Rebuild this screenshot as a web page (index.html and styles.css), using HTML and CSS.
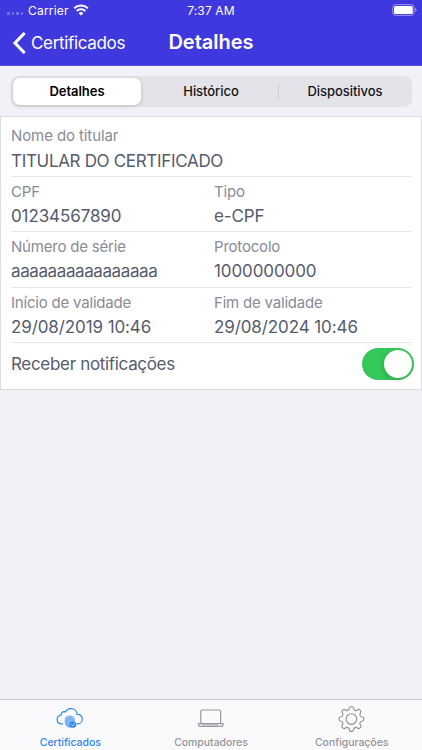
FILE: index.html
```html
<!DOCTYPE html>
<html lang="pt-BR">
  <head>
    <meta charset="utf-8" />
    <meta name="viewport" content="width=device-width, initial-scale=1" />
    <title>Detalhes</title>
    <link rel="stylesheet" href="styles.css">
  </head>
  <body>
    <header class="header">
      <div class="status">
        <div class="carrier">
          <span class="signal"><i></i><i></i><i></i><i></i></span>
          <span class="carrier-name">Carrier</span>
          <svg class="wifi" width="16" height="12" viewBox="0 0 16 12" fill="none" stroke="#fff" stroke-width="2.1">
            <path d="M1.2 4.3a9.8 9.8 0 0 1 13.6 0" />
            <path d="M3.7 7a6.2 6.2 0 0 1 8.6 0" />
            <path d="M8 11.6 5.6 9.2a3.4 3.4 0 0 1 4.8 0z" fill="#fff" stroke="none" />
          </svg>
        </div>
        <span class="time">7:37 AM</span>
        <svg class="battery" width="26" height="12" viewBox="0 0 26 12">
          <rect x="0.7" y="0.6" width="21.4" height="10.8" rx="3" fill="none" stroke="#fff" stroke-opacity="0.45" />
          <rect x="2" y="2" width="18.8" height="8" rx="1.6" fill="#fff" />
          <path d="M23.2 4v4c1.7-.7 1.7-3.3 0-4z" fill="#fff" fill-opacity="0.5" />
        </svg>
      </div>
      <nav class="nav">
        <a class="back">
          <svg width="14" height="24" viewBox="0 0 14 24" fill="none" stroke="#fff" stroke-width="3.1">
            <path d="M12.6 2 3 12l9.6 10" />
          </svg>
          <span>Certificados</span>
        </a>
        <h1 class="title">Detalhes</h1>
        <span></span>
      </nav>
    </header>

    <main class="content">
      <div class="segments">
        <button class="segment active">Detalhes</button>
        <button class="segment">Histórico</button>
        <button class="segment divided">Dispositivos</button>
      </div>

      <section class="card">
        <div class="row first">
          <div class="field">
            <p class="label">Nome do titular</p>
            <p class="value tight">TITULAR DO CERTIFICADO</p>
          </div>
        </div>
        <div class="row">
          <div class="field">
            <p class="label">CPF</p>
            <p class="value">01234567890</p>
          </div>
          <div class="field">
            <p class="label">Tipo</p>
            <p class="value">e-CPF</p>
          </div>
        </div>
        <div class="row">
          <div class="field">
            <p class="label">Número de série</p>
            <p class="value serial">aaaaaaaaaaaaaaaa</p>
          </div>
          <div class="field">
            <p class="label">Protocolo</p>
            <p class="value">1000000000</p>
          </div>
        </div>
        <div class="row">
          <div class="field">
            <p class="label">Início de validade</p>
            <p class="value">29/08/2019 10:46</p>
          </div>
          <div class="field">
            <p class="label">Fim de validade</p>
            <p class="value">29/08/2024 10:46</p>
          </div>
        </div>
        <div class="notify">
          <p class="value tight">Receber notificações</p>
          <div class="switch"><div class="knob"></div></div>
        </div>
      </section>
    </main>

    <footer class="tabs">
      <a class="tab selected">
        <svg width="28" height="24" viewBox="0 0 28 24" fill="none" stroke="#2f86ea" stroke-width="1.2" stroke-linecap="round">
          <path d="M6.6 17.8H5.9C3 17.8 1.2 15.8 1.2 13.4c0-2.3 1.6-4.1 3.8-4.3C5 7 6.5 5.6 8.1 5.6c.6 0 1.1.1 1.5.3C10.5 3.9 12.5 2.7 15 2.7c3.5 0 6 2.5 6.2 5.7 2.9-.2 5.1 1.8 5.1 4.5s-2 4.9-4.6 4.9h-.9" />
          <path d="M8.6 14.4c0-3.2 2.1-4.9 5.2-4.9s5.2 1.8 5.2 4.9v3.2c0 2.4-2.2 4.3-4.8 4.3-3.6 0-5.6-2.9-5.6-7.5z" fill="#8bbcf5" stroke="none" />
          <path d="M10.3 18.3v-3.4c0-4.3 6.6-4.3 6.6-.2M12 20v-4.7c0-2.3 3.3-2.3 3.3 0v2.4M13.7 15.5v5" stroke="#62a5f1" stroke-width=".7" />
          <circle cx="17" cy="18.6" r="3.2" fill="#2f86ea" stroke="none" />
          <path d="m15.6 18.6 1.1 1.1 1.9-2.1" stroke="#fff" stroke-width=".9" />
        </svg>
        <span>Certificados</span>
      </a>
      <a class="tab">
        <svg width="28" height="24" viewBox="0 0 28 24" fill="none" stroke="#97979c" stroke-width="1.2">
          <path d="M3.8 17V5.3c0-.9.4-1.3 1.3-1.3h17.2c.9 0 1.3.4 1.3 1.3V17" />
          <path d="M1.5 17.6h24.6v1c0 1.1-.6 1.7-1.7 1.7H3.2c-1.1 0-1.7-.6-1.7-1.7z" />
          <path d="M5 18.9h16" stroke-width=".9" />
        </svg>
        <span>Computadores</span>
      </a>
      <a class="tab">
        <svg width="28" height="28" viewBox="-13.4 -13 28 28" fill="none" stroke="#929297" stroke-width="1.15">
          <defs>
            <path id="tooth" d="M-3.6-8.6C-2.4-9.1-2.2-9.6-2-11Q-1.8-12.3-.9-12.3H.9Q1.8-12.3 2-11C2.2-9.6 2.4-9.1 3.6-8.6" />
          </defs>
          <use href="#tooth" />
          <use href="#tooth" transform="rotate(45)" />
          <use href="#tooth" transform="rotate(90)" />
          <use href="#tooth" transform="rotate(135)" />
          <use href="#tooth" transform="rotate(180)" />
          <use href="#tooth" transform="rotate(225)" />
          <use href="#tooth" transform="rotate(270)" />
          <use href="#tooth" transform="rotate(315)" />
          <circle r="5.3" />
        </svg>
        <span>Configurações</span>
      </a>
    </footer>
  </body>
</html>
```
FILE: styles.css
```css
:root {
  --brand: #4038df;
  --page: #f2f1f7;
  --line: #e8e8ec;
  --text: #565b6d;
  --muted: #898b98;
}

* {
  box-sizing: border-box;
}

body {
  margin: 0;
  height: 750px;
  display: flex;
  flex-direction: column;
  background: var(--page);
  font-family: Inter, "Liberation Sans", sans-serif;
  overflow: hidden;
}

p,
h1 {
  margin: 0;
  font-weight: 400;
}

.header {
  height: 66px;
  background: var(--brand);
  border-bottom: 1px solid #5a50d8;
  color: #fff;
}

.status {
  display: grid;
  grid-template-columns: 1fr auto 1fr;
  align-items: center;
  height: 20px;
  padding: 0 4px 0 7px;
  font-size: 12px;
}

.time {
  margin-right: 3px;
  letter-spacing: 0.15px;
}

.carrier {
  display: flex;
  align-items: center;
}

.signal {
  display: flex;
  gap: 2px;
  width: 21px;
  padding-top: 7px;
}

.signal i {
  width: 2.6px;
  height: 2.6px;
  border-radius: 1px;
  background: rgba(255, 255, 255, 0.3);
}

.carrier-name {
  width: 45px;
  letter-spacing: 0.2px;
}

.battery {
  justify-self: end;
}

.nav {
  display: grid;
  grid-template-columns: 1fr auto 1fr;
  align-items: center;
  height: 45px;
  padding: 0 12px;
}

.back {
  display: flex;
  align-items: center;
  gap: 5px;
  font-size: 17px;
  letter-spacing: -0.33px;
}

.title {
  margin-top: -2px;
  font-size: 20px;
  font-weight: 600;
}

.content {
  flex: 1;
}

.segments {
  display: flex;
  height: 31px;
  margin: 10px 10px 9px 11px;
  border-radius: 8px;
  background: #e4e3e9;
}

.segment {
  width: 134px;
  padding: 0 0 1px;
  border: 0;
  background: none;
  color: #151518;
  font: 500 13px Inter, "Liberation Sans", sans-serif;
  letter-spacing: -0.05px;
}

.segment.active {
  width: 128px;
  margin: 2px 3px 2px 2px;
  border-radius: 7px;
  background: #fff;
  color: #000;
  font-weight: 600;
  box-shadow: 0 1px 4px rgba(0, 0, 0, 0.16);
}

.divided {
  background: linear-gradient(#cfced5, #cfced5) no-repeat 0 50% / 1px 17px;
}

.card {
  height: 274px;
  padding: 0 9px 0 10px;
  border: 1px solid #dcdce1;
  background: #fff;
}

.row {
  display: flex;
  height: 55.3px;
  padding-top: 3px;
  border-bottom: 1px solid var(--line);
}

.row.first {
  height: 60px;
  padding-top: 7px;
}

.field {
  flex: 1;
  white-space: nowrap;
}

.field:first-child {
  flex: 0 0 203px;
}

.label {
  height: 24px;
  color: var(--muted);
  font-size: 15px;
  line-height: 23px;
  letter-spacing: -0.2px;
}

.first .label {
  height: 25px;
  letter-spacing: -0.1px;
}

.value {
  color: var(--text);
  font-size: 17px;
  line-height: 25px;
  letter-spacing: -0.1px;
}

.value.tight {
  letter-spacing: -0.32px;
}

.value.serial {
  letter-spacing: -0.4px;
}

.notify {
  display: flex;
  justify-content: space-between;
  align-items: center;
  height: 43px;
}

.switch {
  display: flex;
  justify-content: flex-end;
  width: 52px;
  height: 32px;
  margin-right: -2px;
  padding: 2px;
  border-radius: 16px;
  background: #34c759;
}

.knob {
  width: 28px;
  height: 28px;
  border-radius: 50%;
  background: #fff;
  box-shadow: -1px 2px 4px rgba(0, 0, 0, 0.15);
}

.tabs {
  display: flex;
  height: 51px;
  border-top: 1px solid #c9c8ce;
  background: #fafafc;
}

.tab {
  flex: 1;
  display: flex;
  flex-direction: column;
  align-items: center;
  justify-content: space-between;
  padding-top: 6px;
  color: #96969b;
  font-size: 10.5px;
  font-weight: 500;
  line-height: 14px;
  letter-spacing: -0.05px;
}

.tab.selected {
  color: #2f86ea;
}
```
